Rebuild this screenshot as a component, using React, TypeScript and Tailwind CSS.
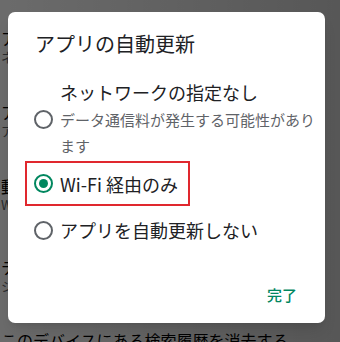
import React from "react";

const font = { fontFamily: '"Noto Sans CJK JP", "Noto Sans", sans-serif' };

// settings page sitting behind the dialog
const pageItems = [
  { title: "アプリの自動更新", sub: "ネットワークの指定なし", mt: "mt-[28px]" },
  { title: "アプリのダウンロード設定", sub: "アプリのダウンロード時に確認する", mt: "mt-[36px]" },
  { title: "動画の自動再生", sub: "Wi-Fi 経由でのみ動画を自動再生する", mt: "mt-[36px]" },
  { title: "テーマ", sub: "システムのデフォルト", mt: "mt-[43px]" },
];

function Radio({ checked }: { checked?: boolean }) {
  return (
    <span
      className={`flex h-[19px] w-[19px] shrink-0 items-center justify-center rounded-full border-2 ${
        checked ? "border-[#01875f]" : "border-[#5f6368]"
      }`}
    >
      {checked && <span className="h-[9px] w-[9px] rounded-full bg-[#01875f]" />}
    </span>
  );
}

export default function App() {
  return (
    <div className="relative h-[342px] w-[340px] overflow-hidden bg-white" style={font}>
      {/* Background page */}
      <div className="flex flex-col pl-[1px]">
        {pageItems.map((it) => (
          <div key={it.title} className={it.mt}>
            <p className="text-[16px] leading-[20px] text-black">{it.title}</p>
            <p className="text-[13px] leading-[18px] text-[#5f6368]">{it.sub}</p>
          </div>
        ))}
        <p className="mt-[35px] whitespace-nowrap text-[16px] leading-[20px] text-black">
          このデバイスにある検索履歴を消去する
        </p>
      </div>

      {/* Scrim */}
      <div className="absolute inset-0 bg-gradient-to-r from-black/[0.58] to-black/[0.66]" />

      {/* Dialog */}
      <div className="absolute left-[8px] top-[12px] flex h-[311px] w-[317px] flex-col rounded-[7px] bg-white pt-[19px] shadow-lg">
        <h2 className="px-[27px] text-[20px] leading-[26px] text-[#202124]">アプリの自動更新</h2>

        <div className="mt-[22px] flex items-center gap-[7px] pl-[26px]">
          <Radio />
          <div className="flex flex-col">
            <span className="text-[18px] leading-[26px] text-[#202124]">ネットワークの指定なし</span>
            <span className="mt-[2px] whitespace-nowrap text-[15px] leading-[26px] text-[#5f6368]">
              データ通信料が発生する可能性があり
              <br />
              ます
            </span>
          </div>
        </div>

        <div className="ml-[17px] mt-[2px] flex h-[45px] w-[165px] items-center gap-[7px] border-2 border-[#e0282e] pl-[7px]">
          <Radio checked />
          <span className="text-[18px] leading-[26px] text-[#202124]">Wi-Fi 経由のみ</span>
        </div>

        <div className="mt-[11px] flex items-center gap-[7px] pl-[26px]">
          <Radio />
          <span className="text-[18px] leading-[26px] text-[#202124]">アプリを自動更新しない</span>
        </div>

        <div className="mt-auto flex justify-end pb-[17px] pr-[28px]">
          <span className="text-[15px] font-medium leading-[22px] text-[#01875f]">完了</span>
        </div>
      </div>
    </div>
  );
}
